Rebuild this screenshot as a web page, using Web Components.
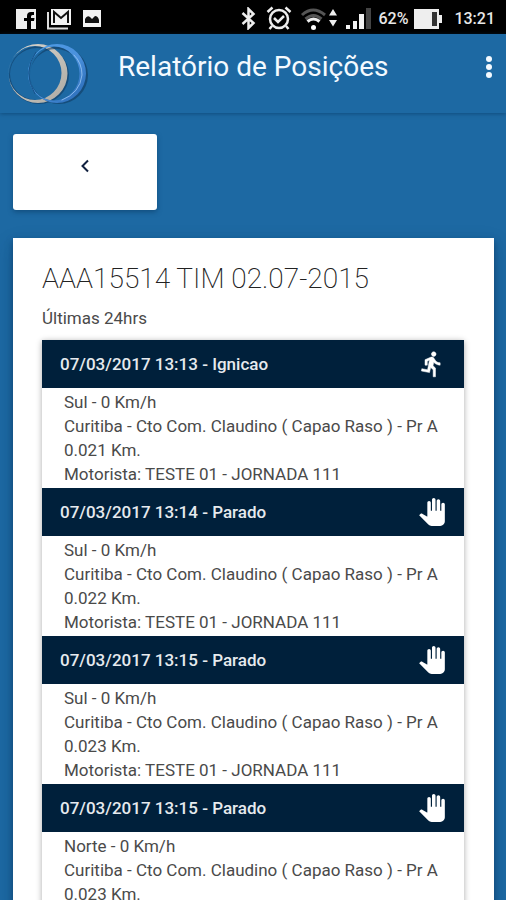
<!DOCTYPE html>
<html lang="pt-BR">
<head>
<meta charset="utf-8">
<meta name="viewport" content="width=device-width, initial-scale=1">
<title>Relatório de Posições</title>
<style>
  body {
    margin: 0;
    background: #1d69a3;
    font-family: Roboto, "Liberation Sans", sans-serif;
    color: #333;
  }
</style>
</head>
<body>
<report-page></report-page>

<script>
const define = (name, html) => {
  const template = document.createElement('template');
  template.innerHTML = html;
  customElements.define(name, class extends HTMLElement {
    constructor() {
      super();
      this.attachShadow({ mode: 'open' }).append(template.content.cloneNode(true));
    }
  });
};

define('status-bar', `
  <style>
    :host { display: flex; align-items: center; justify-content: space-between; height: 34px; padding: 0 11px 0 16px; background: #000; color: #e8e8e8; box-sizing: border-box; font-size: 16px; font-weight: 500; line-height: 20px; }
    .group { display: flex; align-items: center; padding-top: 3px; }
    .left { gap: 10px; }
    svg { display: block; flex: none; }
    .wifi { margin-left: 8px; }
    .alarm { margin-left: 10px; }
    .signal { margin: 0 7px 0 8px; }
    .battery { margin: 0 12px 0 6px; }
  </style>
  <div class="group left">
    <svg width="20" height="20" viewBox="0 0 20 20"><path fill="#eee" d="M0 0h20v20h-5v-8h3l.5-3H15V7.500q0-1.500 1.500-1.500H18V3h-3q-4 0-4 4v2H8v3h3v8H0z"/></svg>
    <svg width="26" height="22" viewBox="0 0 26 22"><path fill="none" stroke="#ddd" stroke-width="2" d="M2 4v16.500h20"/><path fill="#f2f2f2" d="M5 1h20v16H5z"/><path fill="none" stroke="#111" stroke-width="2" d="M8 15V4l7 6 7-6v11"/></svg>
    <svg width="20" height="17" viewBox="0 0 20 17"><path fill="#f2f2f2" d="M1 0h18v17H1z"/><path fill="#111" d="M3 13V9q2-4 5-2l2 2 3-3q3 0 4 4v3z"/></svg>
  </div>
  <div class="group">
    <svg width="15" height="23" viewBox="0 0 15 23"><path fill="none" stroke="#eee" stroke-width="2.500" d="M1.500 6l11 10L7.500 21V2l5 5-11 10"/></svg>
    <svg class="alarm" width="26" height="25" viewBox="0 0 26 25" fill="none" stroke="#eee" stroke-width="2.500"><circle cx="13" cy="13" r="9"/><path d="M8 12l4 4 6-6M1.500 6l5-4.500M24.500 6l-5-4.500M6 20l-2.500 3M20 20l2.500 3"/></svg>
    <svg class="wifi" width="38" height="24" viewBox="0 0 38 24" fill="none" stroke-width="3"><path stroke="#555" d="M2 8Q13-2 25 8"/><path stroke="#555" d="M5.500 12q8-7 16 0"/><path stroke="#eee" d="M7.500 14.500q6-5 12 0"/><circle cx="13.500" cy="20.500" r="2.500" fill="#fff"/><path fill="#eee" d="M29 8.500L33 2l4 6.500zM29 13h8l-4 6.500z"/></svg>
    <svg class="signal" width="25" height="21" viewBox="0 0 25 21"><path fill="#f2f2f2" d="M0 17h4v4H0zM7 13h4v8H7zM13 6h5v15h-5z"/><path fill="#444" d="M20 0h5v21h-5z"/></svg>
    <span>62%</span>
    <svg class="battery" width="28" height="20" viewBox="0 0 28 20"><path fill="#eee" d="M0 0h25v6h3v8h-3v6H0z"/><path fill="#333" d="M18 3h5v14h-5z"/></svg>
    <span>13:21</span>
  </div>
`);

define('brand-logo', `
  <style>
    :host { display: block; flex: none; }
    svg { display: block; }
  </style>
  <svg width="82" height="64" viewBox="0 0 82 64" role="img" aria-label="Logo">
    <defs>
      <linearGradient id="silver" x1="0" y1="0" x2="1" y2="1"><stop offset="0" stop-color="#d8d6d0"/><stop offset=".45" stop-color="#c8c4bc"/><stop offset="1" stop-color="#aaa8a2"/></linearGradient>
      <linearGradient id="azure" x1="0" y1="0" x2="1" y2="1"><stop offset="0" stop-color="#4f9ee8"/><stop offset=".55" stop-color="#4a90dc"/><stop offset="1" stop-color="#2464b0"/></linearGradient>
    </defs>
    <g fill-rule="evenodd">
      <path fill="#103a61" opacity=".6" d="M31 4a30 29 0 1 1 0 58 30 29 0 1 1 0-58zM29 6a27 26 0 1 0 0 52 27 26 0 1 0 0-52z"/>
      <path fill="url(#silver)" d="M30 2a29.500 29.500 0 1 1 0 59 29.500 29.500 0 1 1 0-59zM27 4a26.500 27 0 1 0 0 54 26.500 27 0 1 0 0-54z"/>
      <path fill="#103a61" opacity=".6" d="M51 4a29 29 0 1 1 0 58 29 29 0 1 1 0-58zM48 7a26 26 0 1 0 0 52 26 26 0 1 0 0-52z"/>
      <path fill="url(#azure)" d="M49 2a29 29.500 0 1 1 0 59 29 29.500 0 1 1 0-59zM46 4.500a25.500 27 0 1 0 0 54 25.500 27 0 1 0 0-54z"/>
      <path fill="none" stroke="#9cc8f4" stroke-width="1" stroke-linecap="round" opacity=".8" d="M66 13q8 8 8 20-2 18-20 25"/>
      <path fill="none" stroke="#17528a" stroke-width="1" d="M28 10q-14 20-1 42"/>
    </g>
  </svg>
`);

define('app-header', `
  <style>
    :host { display: flex; align-items: flex-start; height: 79px; padding: 8px 0 0 8px; box-sizing: border-box; background: #1d69a3; color: #f4faff; box-shadow: 0 1px 4px #083a6499; }
    h1 { flex: 1; margin: 8px 0 0 28px; font-size: 28px; line-height: 34px; font-weight: 400; white-space: nowrap; }
    button { border: 0; background: none; color: inherit; margin: 8px 6px 0 0; padding: 4px; cursor: pointer; }
    svg { display: block; }
  </style>
  <brand-logo></brand-logo>
  <h1><slot></slot></h1>
  <button type="button" aria-label="Menu"><svg width="14" height="26" viewBox="0 0 14 26" fill="currentColor"><circle cx="7" cy="5" r="3"/><circle cx="7" cy="13" r="3"/><circle cx="7" cy="21" r="3"/></svg></button>
`);

define('back-button', `
  <style>
    :host { display: block; }
    button { display: flex; align-items: flex-start; justify-content: center; width: 144px; height: 76px; padding: 24px 0 0; border: 0; border-radius: 3px; background: #fff; color: #10203f; box-shadow: 0 2px 5px #0a3c6699; box-sizing: border-box; cursor: pointer; }
  </style>
  <button type="button" aria-label="Voltar"><svg width="16" height="16" viewBox="0 0 16 16" fill="none" stroke="currentColor" stroke-width="2"><path d="M11 2.500L5.500 8l5.500 5.500"/></svg></button>
`);

define('run-icon', `
  <style>:host { display: block; } svg { display: block; }</style>
  <svg width="28" height="28" viewBox="0 0 24 24" fill="#fff" stroke="#fff" stroke-width=".4"><path d="M13.490 5.480c1.100 0 2-.9 2-2s-.9-2-2-2-2 .9-2 2 .9 2 2 2zm-3.600 13.900l1-4.400 2.100 2v6h2v-7.500l-2.100-2 .6-3c1.300 1.500 3.300 2.500 5.500 2.500v-2c-1.900 0-3.500-1-4.300-2.400l-1-1.600c-.4-.6-1-1-1.700-1-.3 0-.5.1-.8.1l-5.200 2.200v4.700h2v-3.400l1.800-.7-1.600 8.100-4.900-1-.4 2 7 1.400z"/></svg>
`);

define('hand-icon', `
  <style>:host { display: block; } svg { display: block; }</style>
  <svg width="28" height="28" viewBox="0 0 24 24" fill="#fff"><path d="M23 5.500V20c0 2.200-1.800 4-4 4h-7.300c-1.080 0-2.100-.43-2.850-1.190L1 14.830s1.260-1.230 1.300-1.250c.22-.19.49-.29.79-.29.22 0 .42.06.6.16.04.01 4.310 2.460 4.310 2.460V4c0-.83.67-1.500 1.500-1.500S11 3.170 11 4v7h1V1.500c0-.83.67-1.500 1.500-1.500S15 .67 15 1.500V11h1V2.500c0-.83.67-1.500 1.500-1.500s1.500.67 1.500 1.500V11h1V5.500c0-.83.67-1.500 1.500-1.500s1.500.67 1.500 1.500z"/></svg>
`);

define('position-item', `
  <style>
    :host { display: block; }
    header { display: flex; align-items: center; justify-content: space-between; height: 48px; padding: 0 18px; box-sizing: border-box; background: #00203b; color: #e6eaee; }
    h3 { margin: 0; font-size: 17px; line-height: 24px; font-weight: 500; }
    .body { padding: 2px 15px 2px 22px; font-size: 17px; line-height: 24px; color: #4a4a4a; }
  </style>
  <header><h3><slot name="title"></slot></h3><slot name="icon"></slot></header>
  <div class="body"><slot></slot></div>
`);

define('position-card', `
  <style>
    :host { display: block; padding: 23px 30px 30px 29px; background: #fff; box-shadow: 0 3px 6px #0a325a99, 0 8px 18px #0a325a44; }
    h2 { margin: 0; font-size: 28px; line-height: 36px; font-weight: 200; color: #222; }
    p { margin: 9px 0 10px; font-size: 17px; line-height: 24px; color: #4a4a4a; }
    .list { box-shadow: 0 1px 6px #00000055; }
  </style>
  <h2><slot name="title"></slot></h2>
  <p><slot name="period"></slot></p>
  <div class="list"><slot></slot></div>
`);

define('report-page', `
  <style>
    :host { display: flex; flex-direction: column; height: 100vh; }
    status-bar, app-header { flex: none; }
    main { flex: 1; min-height: 0; overflow-y: auto; scrollbar-width: none; padding: 21px 12px 24px 13px; }
    app-header { z-index: 1; }
    back-button { margin-bottom: 28px; }
    .line { display: block; }
  </style>
  <status-bar></status-bar>
  <app-header>Relatório de Posições</app-header>
  <main>
    <back-button></back-button>
    <position-card>
      <span slot="title">AAA15514 TIM 02.07-2015</span>
      <span slot="period">Últimas 24hrs</span>
      <position-item>
        <span slot="title">07/03/2017 13:13 - Ignicao</span><run-icon slot="icon"></run-icon>
        <span class="line">Sul - 0 Km/h</span>
        <span class="line">Curitiba - Cto Com. Claudino ( Capao Raso ) - Pr A 0.021 Km.</span>
        <span class="line">Motorista: TESTE 01 - JORNADA 111</span>
      </position-item>
      <position-item>
        <span slot="title">07/03/2017 13:14 - Parado</span><hand-icon slot="icon"></hand-icon>
        <span class="line">Sul - 0 Km/h</span>
        <span class="line">Curitiba - Cto Com. Claudino ( Capao Raso ) - Pr A 0.022 Km.</span>
        <span class="line">Motorista: TESTE 01 - JORNADA 111</span>
      </position-item>
      <position-item>
        <span slot="title">07/03/2017 13:15 - Parado</span><hand-icon slot="icon"></hand-icon>
        <span class="line">Sul - 0 Km/h</span>
        <span class="line">Curitiba - Cto Com. Claudino ( Capao Raso ) - Pr A 0.023 Km.</span>
        <span class="line">Motorista: TESTE 01 - JORNADA 111</span>
      </position-item>
      <position-item>
        <span slot="title">07/03/2017 13:15 - Parado</span><hand-icon slot="icon"></hand-icon>
        <span class="line">Norte - 0 Km/h</span>
        <span class="line">Curitiba - Cto Com. Claudino ( Capao Raso ) - Pr A 0.023 Km.</span>
      </position-item>
    </position-card>
  </main>
`);
</script>
</body>
</html>
